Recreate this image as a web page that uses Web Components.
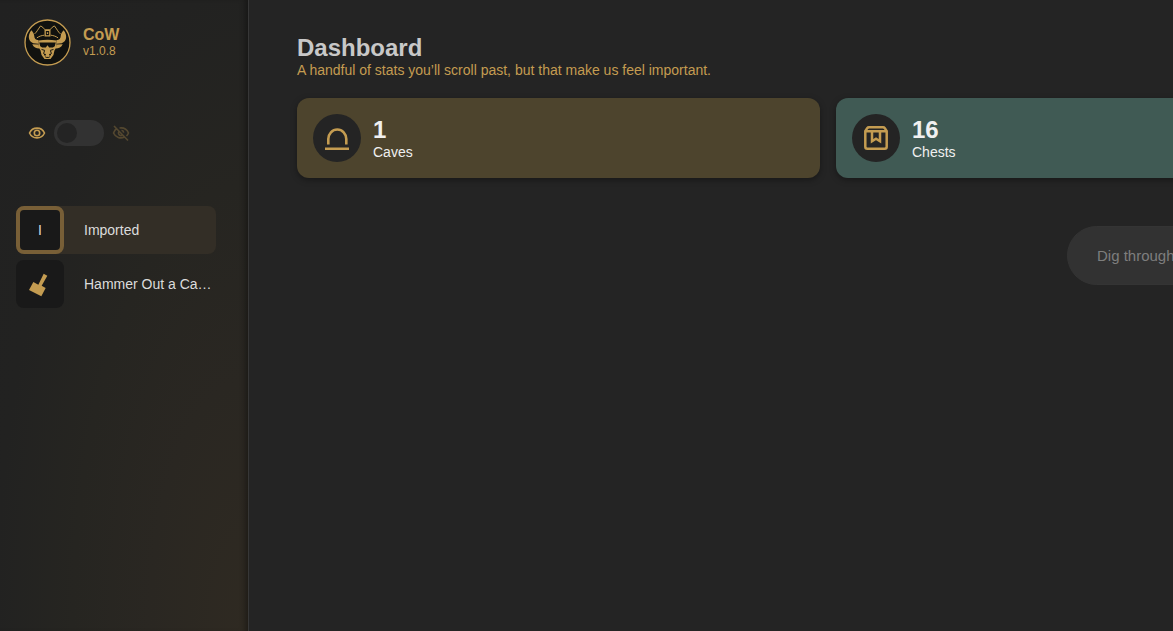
<!DOCTYPE html>
<html lang="en">
<head>
<meta charset="utf-8">
<meta name="viewport" content="width=device-width, initial-scale=1">
<title>CoW</title>
<style>
	:root {
		--gold: #c49c51;
		--surface: #242424;
		--tile: #191919;
		--control: #323232;
	}

	body {
		margin: 0;
		background: var(--surface);
		color: #dcdcdc;
		font: 14px/16px "Liberation Sans", Arial, sans-serif;
	}
</style>
</head>
<body>
<cow-app>
	<cow-sidebar slot="sidebar">
		<cow-brand slot="brand" version="v1.0.8">CoW</cow-brand>
		<cow-visibility slot="visibility"></cow-visibility>
		<cow-cave selected>
			<span slot="icon">I</span>
			Imported
		</cow-cave>
		<cow-cave>
			<svg slot="icon" width="48" height="48" viewBox="0 0 144 144" fill="#c49c51" aria-hidden="true">
				<path d="M83 41l11 6-17 30 12 7-13 25-37-19 13-24 15 8z"/>
			</svg>
			Hammer Out a Ca…
		</cow-cave>
	</cow-sidebar>
	<cow-dashboard>
		<cow-stat value="1" label="Caves" style="--stat-color: #4d442d">
			<svg width="24" height="24" viewBox="0 0 24 24" fill="none" stroke="#c49c51" stroke-width="2.6" aria-hidden="true">
				<path d="M3.300 18.500V13a9 9.500 0 0 1 18 0v5.500M0 22.700h24"/>
			</svg>
		</cow-stat>
		<cow-stat value="16" label="Chests" style="--stat-color: #405a54">
			<svg width="24" height="24" viewBox="0 0 24 24" fill="none" stroke="#c49c51" stroke-width="2.5" aria-hidden="true">
				<path d="M1.300 5.200V20.700a2 2 0 0 0 2 2h17.400a2 2 0 0 0 2-2V5.200L20.800 2.200Q20.200 1.300 19 1.300H5Q3.800 1.300 3.200 2.200zM1.300 5.200h21.400M8 5.200V15.200l4-2.400 4 2.400V5.200"/>
			</svg>
		</cow-stat>
	</cow-dashboard>
</cow-app>

<script>
const createTemplate = (html) => {
	const template = document.createElement('template');
	template.innerHTML = html;
	return template;
};

class BaseElement extends HTMLElement {

	constructor() {
		super();

		this.attachShadow({ mode: 'open' });
		this.shadowRoot.appendChild(this.constructor.template.content.cloneNode(true));
	}

}

class App extends BaseElement {

	static template = createTemplate(`
		<style>
			:host {
				display: grid;
				grid-template-columns: 249px minmax(0, 1fr);
				min-height: 100vh;
			}
		</style>
		<slot name="sidebar"></slot>
		<slot></slot>
	`);

}

class Sidebar extends BaseElement {

	static template = createTemplate(`
		<style>
			:host {
				display: block;
				box-sizing: border-box;
				border-right: 1px solid #373737;
				background:
					radial-gradient(ellipse at 100% 100%, #2f2a22 0%, #2a2722 28%, #262521 50%, #222221 72%, #212121 100%);
				box-shadow: inset -6px 0 6px -4px rgba(0, 0, 0, .4);
			}

			aside {
				display: flex;
				flex-direction: column;
				padding: 19px 32px 16px 16px;
			}

			.visibility {
				margin: 54px 0 60px;
			}

			nav {
				display: grid;
				gap: 6px;
			}
		</style>
		<aside>
			<slot name="brand"></slot>
			<div class="visibility"><slot name="visibility"></slot></div>
			<nav aria-label="Caves"><slot></slot></nav>
		</aside>
	`);

}

class Brand extends BaseElement {

	static template = createTemplate(`
		<style>
			:host {
				display: flex;
				align-items: center;
				gap: 12px;
				padding-left: 8px;
				color: var(--gold);
			}

			svg {
				display: block;
			}

			.name {
				font-size: 16px;
				font-weight: bold;
			}

			.version {
				font-size: 12px;
			}
		</style>
		<svg width="47" height="47" viewBox="5 5 142 142" fill="#c49c51" aria-hidden="true">
			<circle cx="76" cy="76" r="68" fill="#11120f" stroke="#c49c51" stroke-width="4"/>
			<!-- Horns and ears -->
			<path d="M27 39c-12 15-9 34 6 39l16 2V69c-9-1-13-6-13-13 0-6-4-12-9-17zM125 39c12 15 9 34-6 39l-16 2V69c9-1 13-6 13-13 0-6 4-12 9-17z"/>
			<path d="M30 81l19 1 2 12c-9 0-17-4-21-13zM122 81l-19 1-2 12c9 0 17-4 21-13z"/>
			<!-- Hat -->
			<path d="M37 50c7-6 11-15 18-24 6 2 10 9 15 12h12c5-3 9-10 15-12 7 9 11 18 18 24M44 62c7-5 14-7 22-8M108 62c-7-5-14-7-22-8" fill="none" stroke="#c49c51" stroke-width="3"/>
			<path d="M67 37h18v21H67zM71 41v13h10V41zM74 45h4v5h-4z" fill-rule="evenodd"/>
			<!-- Face -->
			<path d="M49 70q27-5 54 0v20l-6 10-3 14-9 12H67l-9-12-3-14-6-10z"/>
			<path d="M51 76h50l-3 11-6 4H81l-5-7-5 7H60l-6-4z" fill="#11120f"/>
			<path d="M58 97l10 3M94 97l-10 3M67 101l-3 9M85 101l3 9M69 119l3 2h8l3-2" fill="none" stroke="#11120f" stroke-width="3"/>
			<path d="M65 109l6 2v4h-5zM87 109l-6 2v4h5z" fill="#11120f"/>
		</svg>
		<div>
			<div class="name"><slot></slot></div>
			<div class="version"></div>
		</div>
	`);

	connectedCallback() {
		this.shadowRoot.querySelector('.version').textContent = this.getAttribute('version');
	}

}

class Visibility extends BaseElement {

	static template = createTemplate(`
		<style>
			:host {
				display: block;
			}

			label {
				display: flex;
				align-items: center;
				gap: 8px;
				padding-left: 12px;
			}

			input {
				appearance: none;
				display: flex;
				align-items: center;
				box-sizing: border-box;
				width: 50px;
				height: 26px;
				margin: 0;
				padding: 3px;
				border-radius: 13px;
				background: var(--control);
			}

			input::before {
				content: "";
				width: 20px;
				height: 20px;
				border-radius: 50%;
				background: var(--surface);
			}

			input:checked {
				justify-content: flex-end;
			}

			.off {
				opacity: .3;
			}
		</style>
		<label>
			<svg width="18" height="18" viewBox="0 0 18 18" fill="none" stroke="#c49c51" stroke-width="1.6" aria-hidden="true">
				<path d="M1.500 9c3-6.500 12-6.500 15 0-3 6.500-12 6.500-15 0z"/>
				<circle cx="9" cy="9" r="2.700"/>
			</svg>
			<input type="checkbox" aria-label="Hide caves">
			<svg class="off" width="18" height="18" viewBox="0 0 18 18" fill="none" stroke="#c49c51" stroke-width="1.6" aria-hidden="true">
				<path d="M5 4.500C3.500 5.300 2.300 7 1.500 9c2 4.500 7 6 11 4M7.500 4c4-.5 7.500 1.300 9 5-.5 1.200-1.200 2.200-2 3M7 7.500c-1.600 2 .5 5 3 3.800M9.500 6.300c1.300.2 2.100 1 2.200 2.300M2 2l14 14.500"/>
			</svg>
		</label>
	`);

}

class Cave extends BaseElement {

	static template = createTemplate(`
		<style>
			:host {
				display: block;
				border-radius: 8px;
			}

			:host([selected]) {
				background: #332e26;
			}

			a {
				display: flex;
				align-items: center;
				gap: 20px;
				color: inherit;
				text-decoration: none;
			}

			.tile {
				display: flex;
				flex: none;
				align-items: center;
				justify-content: center;
				box-sizing: border-box;
				width: 48px;
				height: 48px;
				border-radius: 8px;
				background: var(--tile);
			}

			:host([selected]) .tile {
				border: 4px solid #785f37;
			}

			.name {
				white-space: nowrap;
			}
		</style>
		<a href="#">
			<span class="tile"><slot name="icon"></slot></span>
			<span class="name"><slot></slot></span>
		</a>
	`);

}

class Dashboard extends BaseElement {

	static template = createTemplate(`
		<style>
			:host {
				display: block;
				overflow: hidden;
			}

			/* The row always keeps four columns and runs past narrow windows. */
			main {
				min-width: 2140px;
				padding: 34px 48px;
			}

			h1 {
				margin: 0;
				color: #c8c8c8;
				font-size: 24px;
				line-height: 28px;
			}

			p {
				margin: 0 0 20px;
				color: var(--gold);
			}

			.stats {
				display: grid;
				grid-template-columns: repeat(4, 1fr);
				gap: 16px;
			}

			form {
				display: flex;
				justify-content: center;
				margin-top: 48px;
			}

			input {
				box-sizing: border-box;
				width: 600px;
				height: 59px;
				padding: 0 29px;
				border: 1px solid #343434;
				border-radius: 30px;
				background: var(--control);
				color: inherit;
				font: inherit;
				font-size: 15px;
			}

			input::placeholder {
				color: #7e7e7e;
			}
		</style>
		<main>
			<h1>Dashboard</h1>
			<p>A handful of stats you’ll scroll past, but that make us feel important.</p>
			<div class="stats"><slot></slot></div>
			<form role="search">
				<input type="text" placeholder="Dig through" aria-label="Dig through">
			</form>
		</main>
	`);

}

class Stat extends BaseElement {

	static template = createTemplate(`
		<style>
			:host {
				display: flex;
				align-items: center;
				gap: 12px;
				padding: 16px;
				border-radius: 12px;
				background: var(--stat-color);
				box-shadow: 0 2px 6px rgba(0, 0, 0, .35);
				color: #f0f0f0;
			}

			.icon {
				display: flex;
				align-items: center;
				justify-content: center;
				width: 48px;
				height: 48px;
				border-radius: 50%;
				background: var(--surface);
			}

			.value {
				font-size: 24px;
				font-weight: bold;
				line-height: 28px;
			}
		</style>
		<div class="icon"><slot></slot></div>
		<div>
			<div class="value"></div>
			<div class="label"></div>
		</div>
	`);

	connectedCallback() {
		this.shadowRoot.querySelector('.value').textContent = this.getAttribute('value');
		this.shadowRoot.querySelector('.label').textContent = this.getAttribute('label');
	}

}

customElements.define('cow-app', App);
customElements.define('cow-sidebar', Sidebar);
customElements.define('cow-brand', Brand);
customElements.define('cow-visibility', Visibility);
customElements.define('cow-cave', Cave);
customElements.define('cow-dashboard', Dashboard);
customElements.define('cow-stat', Stat);
</script>
</body>
</html>
